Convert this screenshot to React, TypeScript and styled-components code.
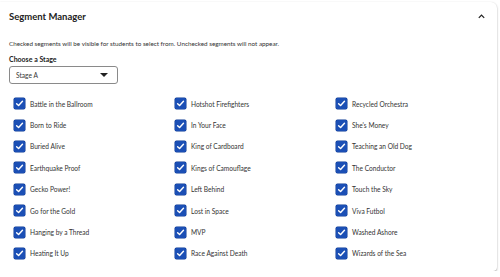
import React, { FC } from 'react'
import styled, { createGlobalStyle } from 'styled-components'

const GlobalStyle = createGlobalStyle`
    body {
        background: #ffffff;
        color: #2b2b2b;
        margin: 0px;
        font-family: Lato, "Noto Sans", sans-serif;
    }
`

const Card = styled.div`
    margin: 2px 3px 0 0;
    height: 269px;
    box-sizing: border-box;
    background: #ffffff;
    border-radius: 0 6px 4px 0;
    box-shadow: 0 1px 2px rgba(0, 0, 0, 0.35), 0 0 1px rgba(0, 0, 0, 0.08);
    padding: 0 11px 0 9px;
`

const Header = styled.div`
    display: flex;
    align-items: center;
    justify-content: space-between;
    height: 28px;
`

const Title = styled.div`
    font-size: 9.5px;
    font-weight: 700;
    color: #222;
`

const Chevron = styled.svg`
    width: 9px;
    height: 9px;
`

const Description = styled.div`
    margin-top: 10px;
    font-size: 6.3px;
    color: #333;
`

const Label = styled.div`
    margin-top: 8px;
    font-size: 7px;
    font-weight: 700;
    color: #222;
`

const Select = styled.div`
    margin-top: 3px;
    width: 109px;
    height: 18px;
    box-sizing: border-box;
    border: 1px solid #8a8a8a;
    border-radius: 3px;
    display: flex;
    align-items: center;
    justify-content: space-between;
    padding: 0 9px 0 6px;
    font-size: 6.6px;
    color: #333;
`

const Caret = styled.div`
    width: 0;
    height: 0;
    border-left: 4px solid transparent;
    border-right: 4px solid transparent;
    border-top: 4px solid #222;
`

const Grid = styled.div`
    margin-top: 9px;
    padding-left: 5px;
    display: grid;
    grid-template-columns: 161px 161px 161px;
    grid-auto-flow: column;
    grid-template-rows: repeat(8, 21.4px);
`

const Item = styled.label`
    display: flex;
    align-items: center;
    gap: 5px;
    font-size: 6.6px;
    color: #333;
`

const Box = styled.span`
    width: 11px;
    height: 11px;
    border-radius: 1.5px;
    background: #1b4fb5;
    display: inline-flex;
    align-items: center;
    justify-content: center;
    box-shadow: 0 0 0 0.5px #0d3a94;
`

const segments = [
    'Battle in the Ballroom', 'Born to Ride', 'Buried Alive', 'Earthquake Proof',
    'Gecko Power!', 'Go for the Gold', 'Hanging by a Thread', 'Heating It Up',
    'Hotshot Firefighters', 'In Your Face', 'King of Cardboard', 'Kings of Camouflage',
    'Left Behind', 'Lost in Space', 'MVP', 'Race Against Death',
    'Recycled Orchestra', "She's Money", 'Teaching an Old Dog', 'The Conductor',
    'Touch the Sky', 'Viva Futbol', 'Washed Ashore', 'Wizards of the Sea',
]

const Check: FC = () => (
    <svg width="9" height="9" viewBox="0 0 10 10">
        <path d="M1.8 5.2 L4 7.3 L8.3 2.6" fill="none" stroke="#fff" strokeWidth="1.6" strokeLinecap="round" strokeLinejoin="round" />
    </svg>
)

const App: FC = () => {
    return (
        <>
            <GlobalStyle />
            <Card>
                <Header>
                    <Title>Segment Manager</Title>
                    <Chevron viewBox="0 0 10 10">
                        <path d="M2 6.5 L5 3.5 L8 6.5" fill="none" stroke="#222" strokeWidth="1.4" />
                    </Chevron>
                </Header>
                <Description>
                    Checked segments will be visible for students to select from. Unchecked segments will not appear.
                </Description>
                <Label>Choose a Stage</Label>
                <Select>
                    <span>Stage A</span>
                    <Caret />
                </Select>
                <Grid>
                    {segments.map((name) => (
                        <Item key={name}>
                            <Box><Check /></Box>
                            {name}
                        </Item>
                    ))}
                </Grid>
            </Card>
        </>
    )
}

export default App
